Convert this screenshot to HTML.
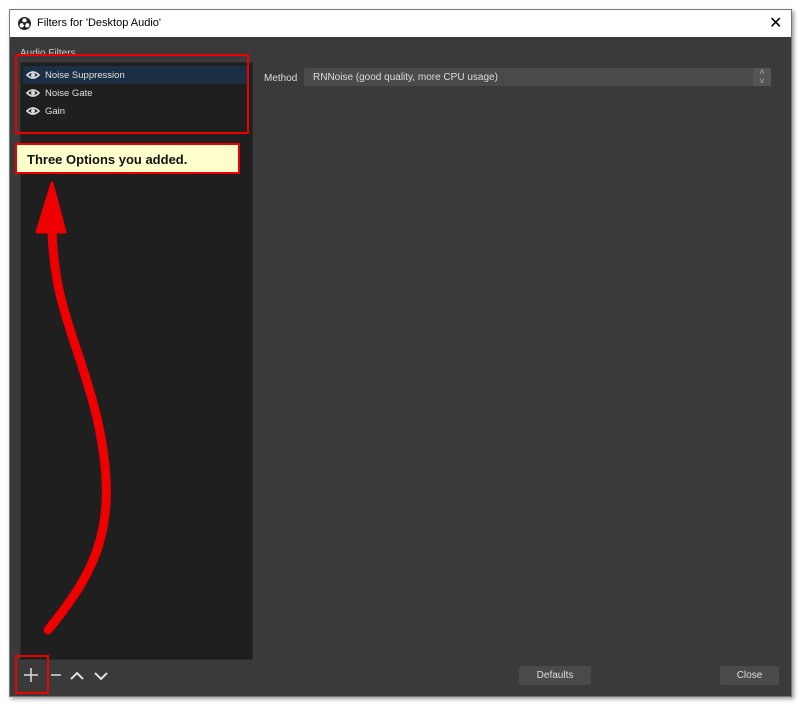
<!DOCTYPE html>
<html><head><style>
body{margin:0;width:800px;height:705px;background:#fff;font-family:"Liberation Sans",sans-serif;position:relative;overflow:hidden}
.win{position:absolute;left:9px;top:9px;width:781px;height:686px;background:#3a3a3a;border:1px solid #777;box-shadow:2px 2px 4px rgba(0,0,0,.4)}
.title{position:absolute;left:0;top:0;width:781px;height:27px;background:#fff;font-size:12px;color:#000}
.abs{position:absolute}
.list{left:10px;top:52px;width:231px;height:596px;background:#1f1f1f;border:1px solid #2a2a2a}
.item{position:absolute;left:2px;width:225px;height:18px;font-size:9.5px;color:#e0e0e0;line-height:19px;padding-left:22px;box-sizing:border-box}
.btn{background:#4a4a4a;color:#ddd;font-size:10px;text-align:center;line-height:19px;border-radius:2px}
</style></head><body>
<div class="win">
 <div class="title">
  <svg class="abs" style="left:8px;top:7px" width="13" height="13" viewBox="0 0 13 13"><circle cx="6.5" cy="6.5" r="6.5" fill="#222"/><circle cx="6.5" cy="3.5" r="2.2" fill="#fff"/><circle cx="3.8" cy="8.3" r="2.2" fill="#fff"/><circle cx="9.2" cy="8.3" r="2.2" fill="#fff"/><circle cx="6.5" cy="6.5" r="1.5" fill="#222"/></svg>
  <span class="abs" style="left:27px;top:7px;font-size:11px">Filters for 'Desktop Audio'</span>
  <span class="abs" style="left:759px;top:3px;font-size:16px">✕</span>
 </div>
 <span class="abs" style="left:10px;top:38px;font-size:10px;color:#ccc">Audio Filters</span>
 <div class="abs list">
  <div class="item" style="top:3px;background:#1c3045">Noise Suppression</div>
  <div class="item" style="top:21px">Noise Gate</div>
  <div class="item" style="top:39px">Gain</div>
  <svg class="abs" style="left:5px;top:7px" width="14" height="50" viewBox="0 0 14 50"><g fill="none" stroke="#ddd" stroke-width="1.6"><path d="M1 5Q7 -1 13 5Q7 11 1 5Z"/><path d="M1 23Q7 17 13 23Q7 29 1 23Z"/><path d="M1 41Q7 35 13 41Q7 47 1 41Z"/></g><g fill="#ddd"><circle cx="7" cy="5" r="2"/><circle cx="7" cy="23" r="2"/><circle cx="7" cy="41" r="2"/></g></svg>
 </div>
 <span class="abs" style="left:254px;top:63px;font-size:10px;color:#ddd">Method</span>
 <div class="abs" style="left:294px;top:58px;width:467px;height:18px;background:#4a4a4a;border-radius:2px"><span class="abs" style="left:9px;top:4px;font-size:10px;color:#ddd">RNNoise (good quality, more CPU usage)</span><span class="abs" style="right:0;top:0;width:18px;height:18px;background:#555;color:#aaa;font-size:9px;text-align:center;line-height:9px">˄<br>˅</span></div>
 <div class="abs btn" style="left:509px;top:656px;width:72px;height:19px">Defaults</div>
 <div class="abs btn" style="left:710px;top:656px;width:59px;height:19px">Close</div>
 <svg class="abs" style="left:0;top:0" width="781" height="686" viewBox="0 0 781 686">
  <path d="M14 665H28M21 658V672" stroke="#ddd" stroke-width="1.5"/>
  <path d="M41 665H51" stroke="#ddd" stroke-width="1.5"/>
  <path d="M61 669L67 663L73 669M85 663L91 669L97 663" fill="none" stroke="#ddd" stroke-width="2"/>
  <rect x="6" y="45" width="232" height="78" fill="none" stroke="#e00" stroke-width="2"/>
  <rect x="6" y="134" width="223" height="29" fill="#ffffcc" stroke="#e00" stroke-width="2"/>
  <text x="17" y="154" font-size="13" font-weight="bold" fill="#111" font-family="Liberation Sans">Three Options you added.</text>
  <rect x="6" y="646" width="32" height="37" fill="none" stroke="#e00" stroke-width="2"/>
  <path d="M38 620C70 580 100 540 96 470C92 390 58 330 47 270C43 245 42 230 42 215" fill="none" stroke="#e00" stroke-width="9" stroke-linecap="round"/>
  <path d="M27 222L42 173L55 222Z" fill="#e00" stroke="#e00" stroke-width="3" stroke-linejoin="round"/>
 </svg>
</div>
</body></html>
